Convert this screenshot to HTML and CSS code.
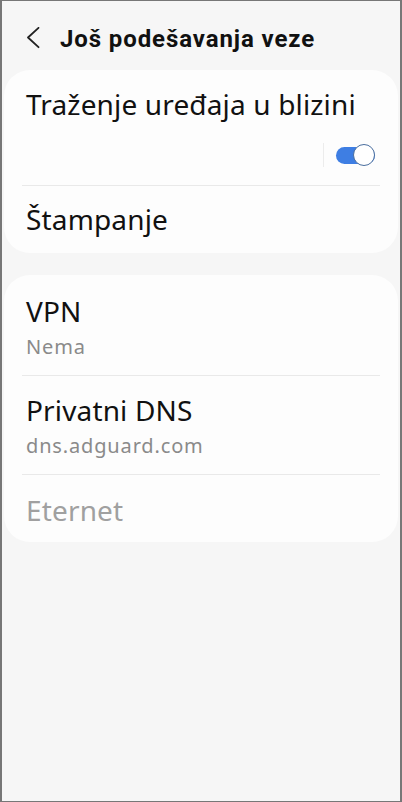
FILE: index.html
```html
<!DOCTYPE html>
<html lang="sr">
<head>
  <meta charset="utf-8">
  <title>Još podešavanja veze</title>
  <meta name="viewport" content="width=device-width, initial-scale=1.0">
  <link rel="stylesheet" href="styles.css">
</head>
<body>
  <div class="screen">
    <header class="topbar">
      <svg class="back" width="14" height="24" viewBox="0 0 14 24">
        <path d="M12.5 0.8 L2 10.5 L12.5 20.2" fill="none" stroke="#222" stroke-width="1.8" stroke-linecap="round" stroke-linejoin="round"/>
      </svg>
      <h1>Još podešavanja veze</h1>
    </header>

    <section class="card">
      <div class="item item-toggle">
        <div class="title">Traženje uređaja u blizini</div>
        <div class="toggle-row">
          <span class="vline"></span>
          <span class="switch"><span class="knob"></span></span>
        </div>
      </div>
      <div class="divider"></div>
      <div class="item item-print">
        <div class="title">Štampanje</div>
      </div>
    </section>

    <section class="card card-two">
      <div class="item">
        <div class="title">VPN</div>
        <div class="sub">Nema</div>
      </div>
      <div class="divider"></div>
      <div class="item">
        <div class="title">Privatni DNS</div>
        <div class="sub">dns.adguard.com</div>
      </div>
      <div class="divider"></div>
      <div class="item item-last">
        <div class="title disabled">Eternet</div>
      </div>
    </section>
  </div>
</body>
</html>
```

FILE: styles.css
```css
* {
  box-sizing: border-box;
}

html, body {
  margin: 0;
  height: 100%;
}

body {
  background-color: #777;
  font-family: "Noto Sans", Roboto, sans-serif;
  color: #111;
}

.screen {
  height: 800px;
  margin: 1px 2px 1px 2px;
  background-color: #f6f6f6;
  padding-top: 21px;
}

.topbar {
  display: flex;
  align-items: center;
  height: 34px;
  padding-left: 24px;
}

.back {
  display: block;
  margin-right: 20px;
}

h1 {
  margin: 0;
  font-family: Roboto, sans-serif;
  font-size: 24px;
  font-weight: 700;
  letter-spacing: 0.9px;
  line-height: 34px;
}

.card {
  background-color: #fdfdfd;
  border-radius: 26px;
  margin: 14px 2px 0 2px;
}

.card-two {
  margin-top: 22px;
  padding-top: 2px;
}

.item {
  padding: 17px 22px 15px 22px;
}

.item-toggle {
  padding-bottom: 18px;
}

.item-print {
  padding-top: 16px;
  padding-bottom: 17px;
}

.item-last {
  padding-top: 18px;
  padding-bottom: 15px;
}

.title {
  font-size: 28px;
  line-height: 34px;
  letter-spacing: 0.15px;
}

.title.disabled {
  color: #a0a0a0;
}

.sub {
  font-size: 20px;
  line-height: 26px;
  letter-spacing: 0.85px;
  color: #8a8a8a;
  margin-top: 6px;
}

.toggle-row {
  display: flex;
  justify-content: flex-end;
  align-items: center;
  height: 24px;
  margin-top: 22px;
}

.vline {
  width: 1px;
  height: 24px;
  background-color: #ececec;
  margin-right: 12px;
}

.switch {
  position: relative;
  display: block;
  width: 39px;
  height: 17px;
  border-radius: 9px;
  background-color: #3e7ee3;
  margin-right: 1px;
}

.knob {
  position: absolute;
  right: 0;
  top: -3px;
  width: 22px;
  height: 22px;
  border-radius: 50%;
  background-color: #fff;
  border: 1.5px solid #4a6e9e;
}

.divider {
  height: 1px;
  background-color: #e9e9e9;
  margin: 0 18px;
}
```
